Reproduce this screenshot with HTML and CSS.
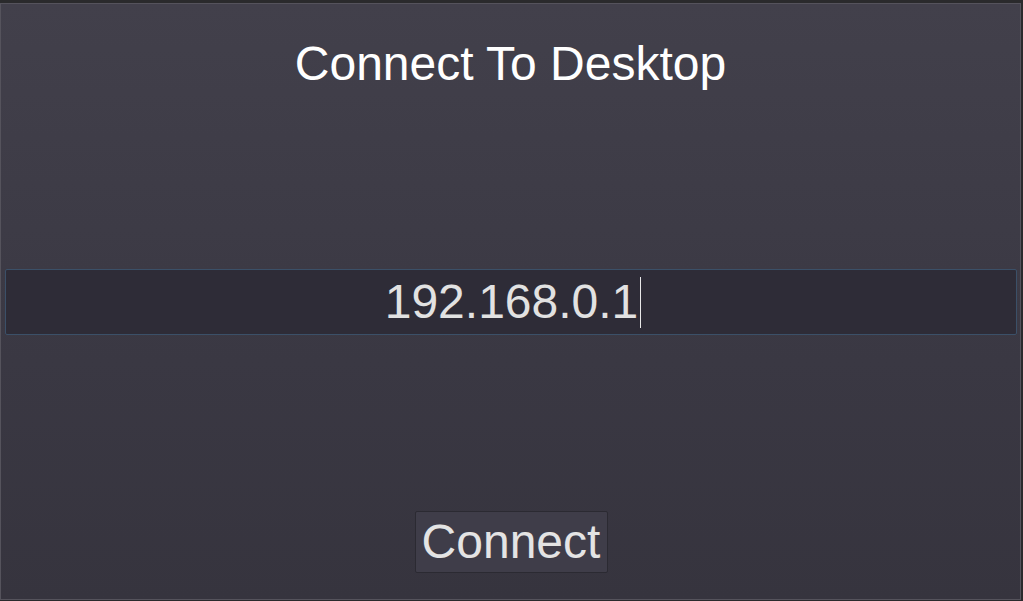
FILE: index.html
```html
<!DOCTYPE html>
<html>
<head>
<meta charset="utf-8">
<link rel="stylesheet" href="styles.css">
</head>
<body>
<div class="frame">
  <div class="window">
    <h1 class="title">Connect To Desktop</h1>
    <div class="field">
      <span class="value">192.168.0.1</span><span class="caret"></span>
    </div>
    <div class="actions">
      <button class="btn">Connect</button>
    </div>
  </div>
</div>
</body>
</html>
```

FILE: styles.css
```css
html, body {
  margin: 0;
  padding: 0;
  width: 1023px;
  height: 601px;
  overflow: hidden;
  background: #2a2a2c;
  font-family: "Liberation Sans", Arial, sans-serif;
}
.frame {
  box-sizing: border-box;
  width: 1023px;
  height: 601px;
  padding: 3px 2px 1px 0;
}
.window {
  box-sizing: border-box;
  height: 100%;
  border: 1px solid #55535c;
  background: linear-gradient(180deg, #42404b 0%, #3a3843 60%, #36343e 100%);
  display: flex;
  flex-direction: column;
  align-items: stretch;
}
.title {
  margin: 0;
  padding-top: 32px;
  text-align: center;
  font-weight: normal;
  font-size: 48px;
  line-height: 56px;
  color: #ffffff;
}
.field {
  margin: 177px 3px 0 4px;
  height: 66px;
  box-sizing: border-box;
  border: 1px solid #3b5068;
  border-radius: 2px;
  background: #2e2c37;
  display: flex;
  align-items: center;
  justify-content: center;
}
.value {
  font-size: 48px;
  color: #e2e2e2;
  line-height: 56px;
  margin-left: 4px;
}
.caret {
  width: 1px;
  height: 51px;
  background: #e8e8e8;
  margin-left: 2px;
}
.actions {
  display: flex;
  justify-content: center;
  margin-top: 176px;
}
.btn {
  box-sizing: border-box;
  width: 193px;
  height: 62px;
  margin-left: 1px;
  padding: 0;
  border: 1px solid #2b2a32;
  border-radius: 2px;
  background: #3f3d49;
  color: #e4e4e4;
  font-family: "Liberation Sans", Arial, sans-serif;
  font-size: 48px;
  line-height: 60px;
}
```
